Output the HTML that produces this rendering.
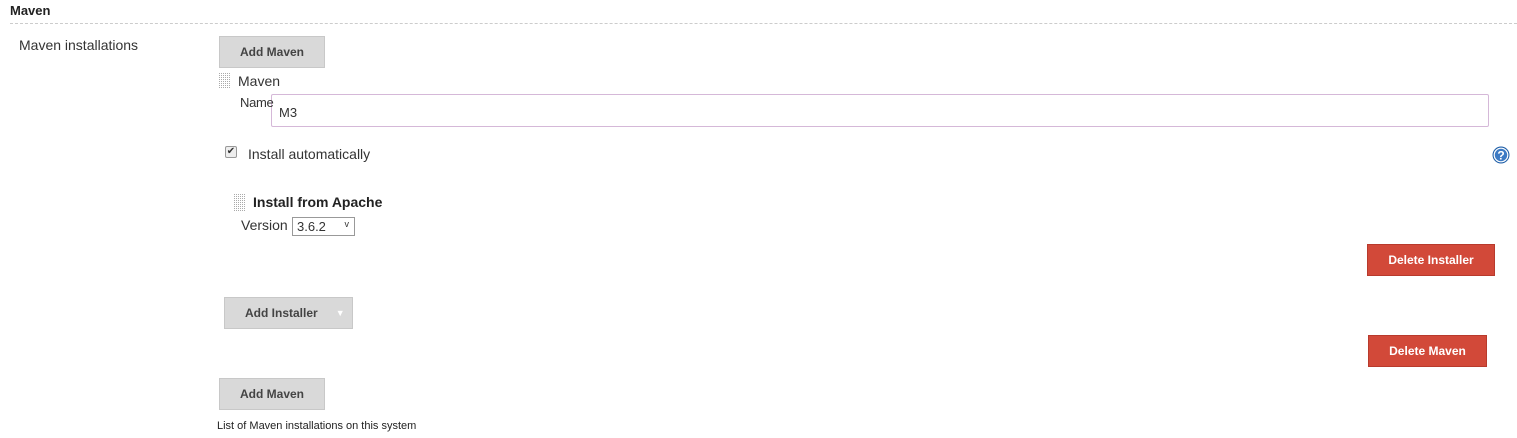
<!DOCTYPE html>
<html><head><style>
body{margin:0;width:1517px;height:438px;background:#fff;font-family:"Liberation Sans",Arial,sans-serif;color:#333;position:relative;overflow:hidden}
.a{position:absolute;white-space:nowrap}
.btn{position:absolute;background:#d9d9d9;border:1px solid #c8c8c8;box-sizing:border-box;font-weight:bold;font-size:12px;color:#444;display:flex;align-items:center;justify-content:center}
.red{background:#d24939;border:1px solid #b83a2c;color:#fff}
</style></head><body>
<svg width="0" height="0" style="position:absolute"><defs><pattern id="dots" width="2" height="2" patternUnits="userSpaceOnUse"><rect width="1" height="1" fill="#aaa"/></pattern></defs></svg>
<div class="a" style="left:10px;top:3px;font-size:13px;font-weight:bold;color:#222">Maven</div>
<div class="a" style="left:10px;top:23px;width:1507px;border-top:1px dashed #ccc"></div>
<div class="a" style="left:19px;top:37px;font-size:14px">Maven installations</div>
<div class="btn" style="left:219px;top:36px;width:106px;height:32px">Add Maven</div>
<svg class="a" style="left:219px;top:73px" width="11" height="16"><rect width="11" height="16" fill="url(#dots)"/></svg>
<div class="a" style="left:238px;top:73px;font-size:14px">Maven</div>
<div class="a" style="left:271px;top:94px;width:1218px;height:33px;border:1px solid #d5b8d8;box-sizing:border-box;border-radius:2px;font-size:13px;padding:10px 0 0 7px;background:#fff">M3</div>
<div class="a" style="left:240px;top:95px;font-size:13px;letter-spacing:-0.3px">Name</div>
<div class="a" style="left:225px;top:146px;width:12px;height:12px;border:1px solid #999;border-radius:2px;box-sizing:border-box;background:#eee;font-size:10px;line-height:10px;text-align:center;color:#333">✔</div>
<div class="a" style="left:248px;top:146px;font-size:14px">Install automatically</div>
<svg class="a" style="left:1492px;top:146px" width="18" height="18" viewBox="0 0 18 18"><circle cx="9" cy="9" r="8.5" fill="#1f5fa8"/><circle cx="9" cy="9" r="6.8" fill="#3c7ac4" stroke="#fff" stroke-width="1.2"/><text x="9" y="13.5" font-size="12" font-weight="bold" fill="#fff" text-anchor="middle" font-family="Liberation Sans">?</text></svg>
<svg class="a" style="left:234px;top:194px" width="11" height="17"><rect width="11" height="17" fill="url(#dots)"/></svg>
<div class="a" style="left:253px;top:194px;font-size:14px;font-weight:bold;color:#222">Install from Apache</div>
<div class="a" style="left:241px;top:217px;font-size:14px">Version</div>
<div class="a" style="left:292px;top:217px;width:63px;height:19px;border:1px solid #999;box-sizing:border-box;font-size:13px;padding:1px 0 0 4px">3.6.2<span style="position:absolute;right:5px;top:1px;font-size:9px">v</span></div>
<div class="btn red" style="left:1367px;top:244px;width:128px;height:32px">Delete Installer</div>
<div class="btn" style="left:224px;top:297px;width:129px;height:32px;justify-content:flex-start;padding-left:20px">Add Installer<span style="margin-left:18px;color:#fff;font-size:9px">▼</span></div>
<div class="btn red" style="left:1368px;top:335px;width:119px;height:32px">Delete Maven</div>
<div class="btn" style="left:219px;top:378px;width:106px;height:32px">Add Maven</div>
<div class="a" style="left:217px;top:420px;font-size:11px;color:#222">List of Maven installations on this system</div>
</body></html>
